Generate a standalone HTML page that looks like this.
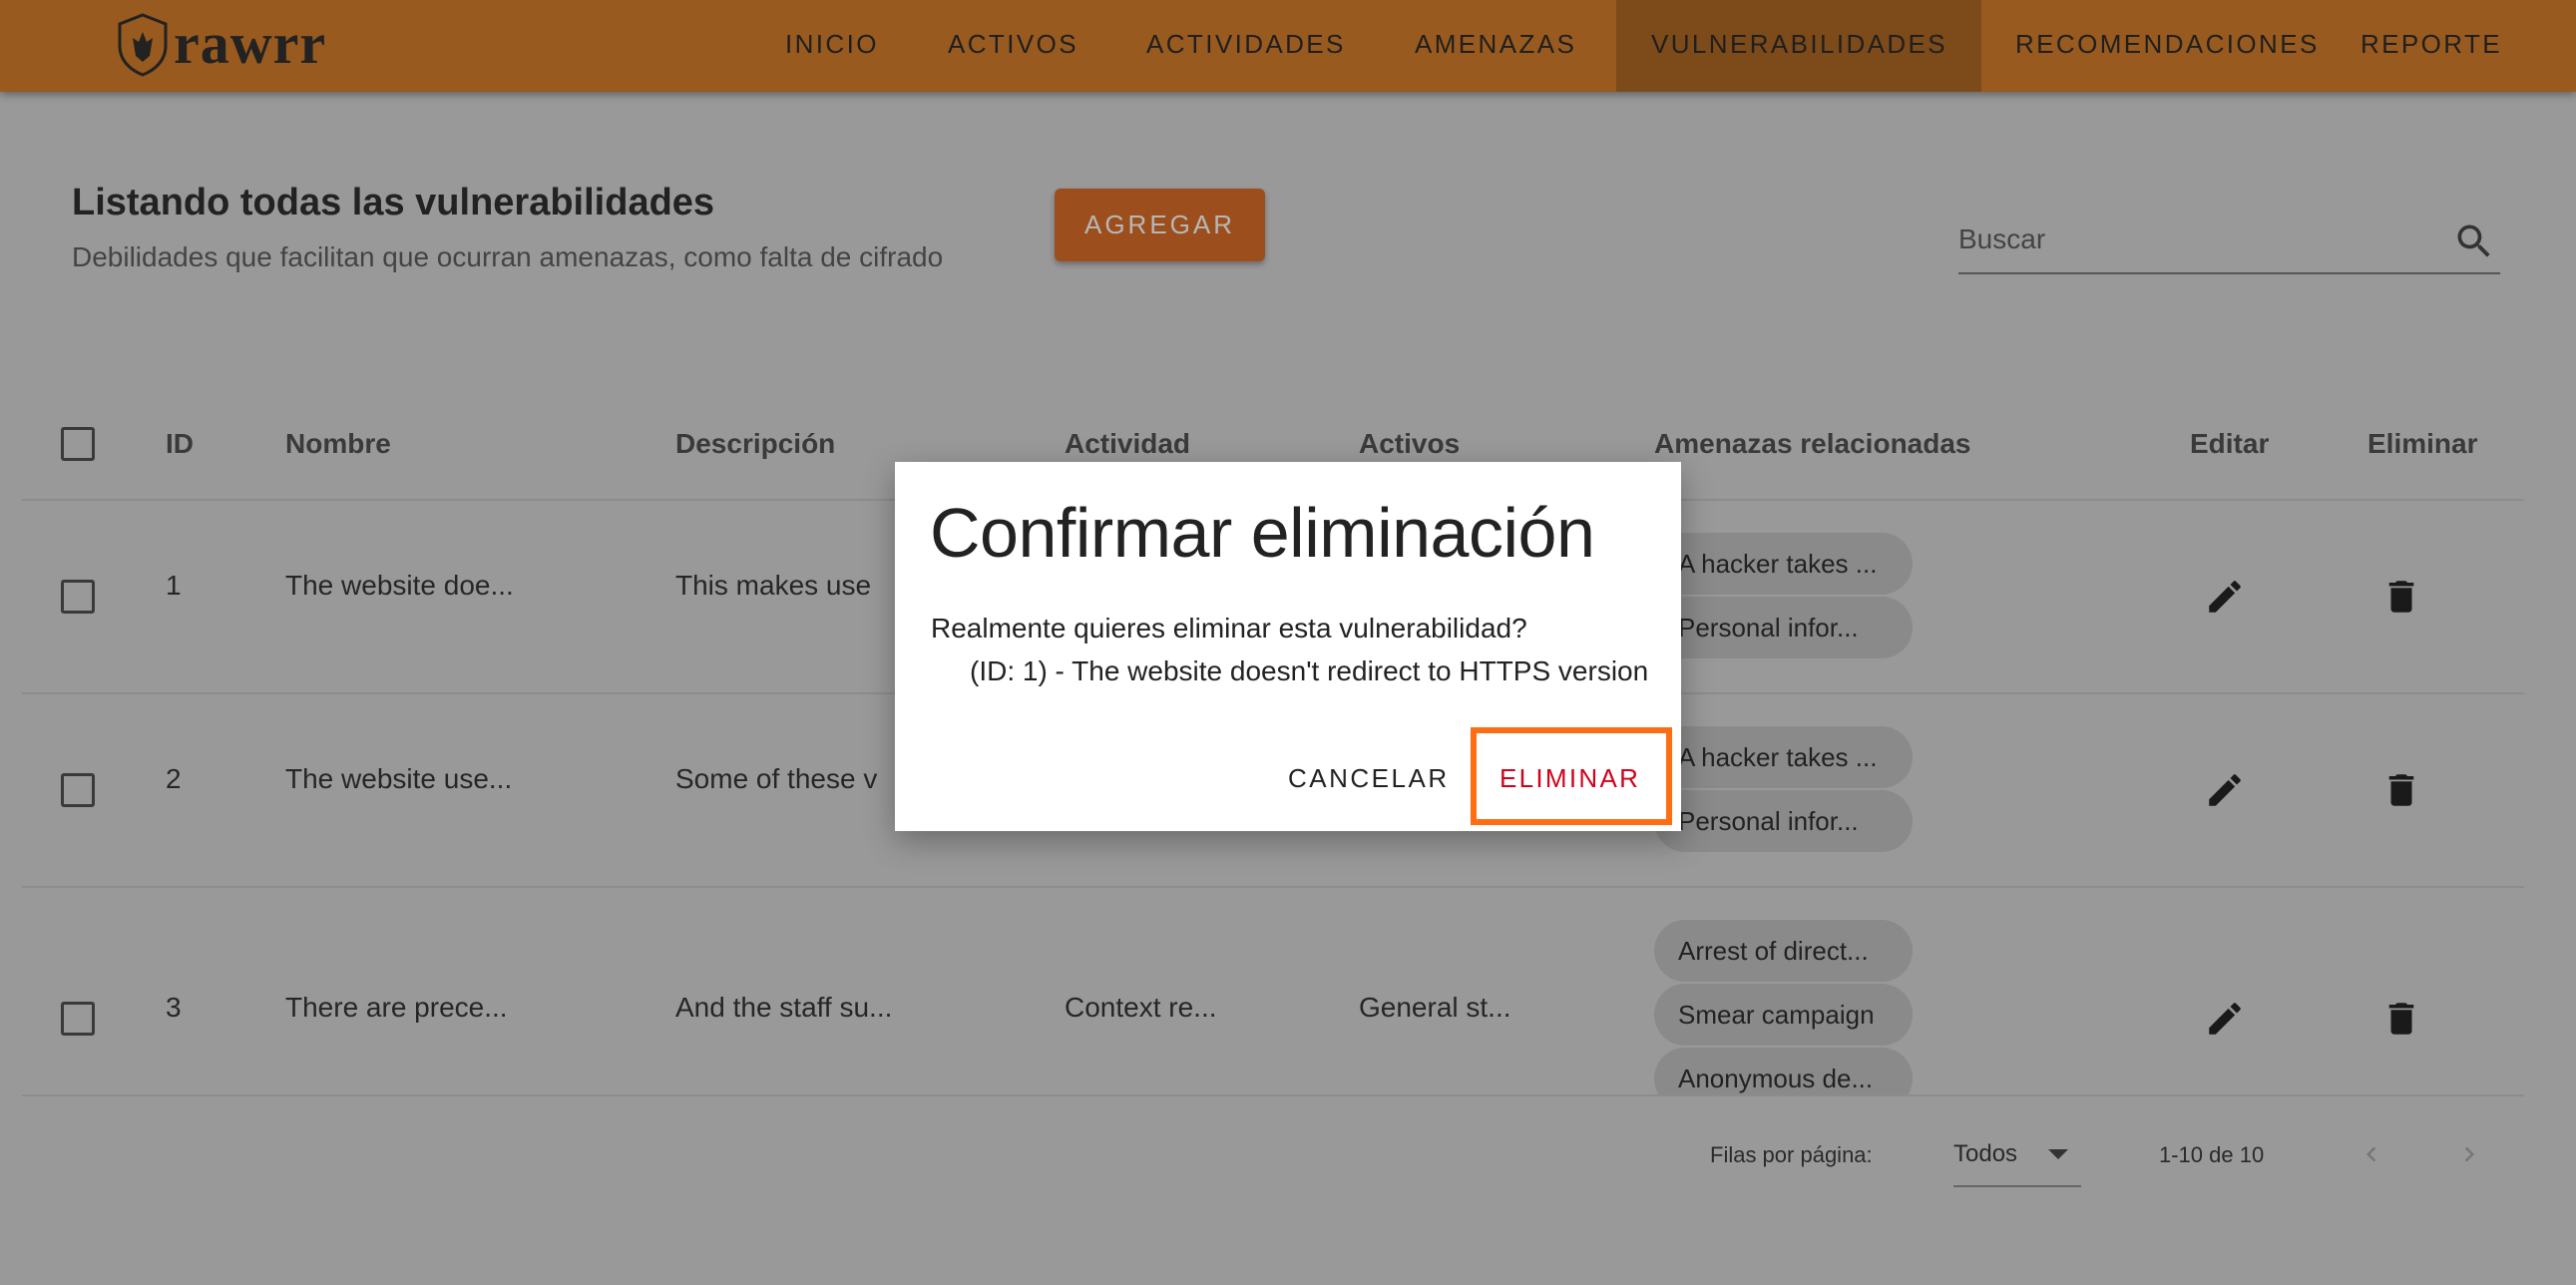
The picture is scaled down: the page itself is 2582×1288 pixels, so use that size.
<!DOCTYPE html>
<html><head><meta charset="utf-8"><style>
*{margin:0;padding:0;box-sizing:border-box}
body{width:2582px;height:1288px;background:#999;font-family:"Liberation Sans",sans-serif;position:relative;overflow:hidden;color:#222}
.a{position:absolute;white-space:nowrap}
.hdr{position:absolute;left:0;top:0;width:2582px;height:92px;background:#985a1e;box-shadow:0 3px 8px rgba(0,0,0,.35)}
.nav{position:absolute;top:29px;font-size:26px;letter-spacing:2.4px;color:#1f1f1f}
.th{top:429px;font-size:28px;font-weight:bold;color:#3a3a3a}
.td{font-size:28px;color:#262626}
.cb{position:absolute;left:61px;width:34px;height:34px;border:3px solid #3a3a3a;border-radius:3px}
.line{position:absolute;left:22px;width:2508px;height:2px;background:#8c8c8c}
.chip{position:absolute;left:1658px;width:259px;height:62px;border-radius:31px;background:#8a8a8a;font-size:26px;color:#222;padding-left:24px;line-height:62px}
svg.i{position:absolute;width:42px;height:42px}
</style></head><body>
<div class="hdr">
 <svg class="a" style="left:116px;top:12px" width="54" height="66" viewBox="0 0 54 66"><path d="M27 3 L50 12 L50 34 C50 48 40 58 27 63 C14 58 4 48 4 34 L4 12 Z" fill="none" stroke="#222" stroke-width="3"/><path d="M27 20 L31 30 L37 26 L34 44 L27 50 L20 44 L17 26 L23 30 Z" fill="#222"/></svg>
 <div class="a" style="left:174px;top:10px;font-family:'Liberation Serif',serif;font-weight:bold;font-size:58px;color:#222;letter-spacing:1px">rawrr</div>
 <div style="position:absolute;left:1620px;top:0;width:366px;height:92px;background:#7d4a19"></div>
 <div class="nav" style="left:787px">INICIO</div>
 <div class="nav" style="left:950px">ACTIVOS</div>
 <div class="nav" style="left:1149px">ACTIVIDADES</div>
 <div class="nav" style="left:1418px">AMENAZAS</div>
 <div class="nav" style="left:1655px">VULNERABILIDADES</div>
 <div class="nav" style="left:2020px">RECOMENDACIONES</div>
 <div class="nav" style="left:2366px">REPORTE</div>
</div>

<div class="a" style="left:72px;top:182px;font-size:38px;font-weight:bold;color:#222">Listando todas las vulnerabilidades</div>
<div class="a" style="left:72px;top:242px;font-size:28px;color:#444">Debilidades que facilitan que ocurran amenazas, como falta de cifrado</div>
<div class="a" style="left:1057px;top:189px;width:211px;height:73px;background:#9c4f1c;border-radius:6px;box-shadow:0 3px 6px rgba(0,0,0,.3);color:#b7b7b7;font-size:26px;letter-spacing:3px;text-align:center;line-height:73px">AGREGAR</div>
<div class="a" style="left:1963px;top:224px;font-size:28px;color:#444">Buscar</div>
<svg class="a" style="left:2458px;top:220px" width="44" height="44" viewBox="0 0 24 24"><path fill="#333" d="M15.5 14h-.79l-.28-.27A6.47 6.47 0 0 0 16 9.5 6.5 6.5 0 1 0 9.5 16c1.610 0 3.090-.59 4.230-1.570l.27.28v.79l5 4.99L20.490 19l-4.990-5zm-6 0C7.010 14 5 11.990 5 9.500S7.010 5 9.500 5 14 7.010 14 9.500 11.990 14 9.500 14z"/></svg>
<div class="a" style="left:1963px;top:273px;width:543px;height:2px;background:#555"></div>

<div class="cb" style="top:428px"></div>
<div class="a th" style="left:166px">ID</div>
<div class="a th" style="left:286px">Nombre</div>
<div class="a th" style="left:677px">Descripción</div>
<div class="a th" style="left:1067px">Actividad</div>
<div class="a th" style="left:1362px">Activos</div>
<div class="a th" style="left:1658px">Amenazas relacionadas</div>
<div class="a th" style="left:2195px">Editar</div>
<div class="a th" style="left:2373px">Eliminar</div>
<div class="line" style="top:500px"></div>
<div class="line" style="top:694px"></div>
<div class="line" style="top:888px"></div>
<div class="line" style="top:1097px"></div>

<div class="cb" style="top:581px"></div>
<div class="a td" style="left:166px;top:571px">1</div>
<div class="a td" style="left:286px;top:571px">The website doe...</div>
<div class="a td" style="left:677px;top:571px">This makes use</div>
<div class="chip" style="top:534px">A hacker takes ...</div>
<div class="chip" style="top:598px">Personal infor...</div>

<div class="cb" style="top:775px"></div>
<div class="a td" style="left:166px;top:765px">2</div>
<div class="a td" style="left:286px;top:765px">The website use...</div>
<div class="a td" style="left:677px;top:765px">Some of these v</div>
<div class="chip" style="top:728px">A hacker takes ...</div>
<div class="chip" style="top:792px">Personal infor...</div>

<div class="cb" style="top:1004px"></div>
<div class="a td" style="left:166px;top:994px">3</div>
<div class="a td" style="left:286px;top:994px">There are prece...</div>
<div class="a td" style="left:677px;top:994px">And the staff su...</div>
<div class="a td" style="left:1067px;top:994px">Context re...</div>
<div class="a td" style="left:1362px;top:994px">General st...</div>
<div style="position:absolute;left:0;top:0;width:2582px;height:1097px;overflow:hidden;pointer-events:none">
<div class="chip" style="top:922px">Arrest of direct...</div>
<div class="chip" style="top:986px">Smear campaign</div>
<div class="chip" style="top:1050px">Anonymous de...</div>
</div>

<svg class="i" style="left:2209px;top:577px" viewBox="0 0 24 24"><path fill="#1a1a1a" d="M3 17.25V21h3.75L17.81 9.94l-3.75-3.75L3 17.25zM20.71 7.04a1 1 0 0 0 0-1.41l-2.34-2.34a1 1 0 0 0-1.41 0l-1.83 1.83 3.75 3.75 1.83-1.83z"/></svg>
<svg class="i" style="left:2386px;top:577px" viewBox="0 0 24 24"><path fill="#1a1a1a" d="M6 19c0 1.1.9 2 2 2h8c1.1 0 2-.9 2-2V7H6v12zM19 4h-3.5l-1-1h-5l-1 1H5v2h14V4z"/></svg>
<svg class="i" style="left:2209px;top:771px" viewBox="0 0 24 24"><path fill="#1a1a1a" d="M3 17.25V21h3.75L17.81 9.94l-3.75-3.75L3 17.25zM20.71 7.04a1 1 0 0 0 0-1.41l-2.34-2.34a1 1 0 0 0-1.41 0l-1.83 1.83 3.75 3.75 1.83-1.83z"/></svg>
<svg class="i" style="left:2386px;top:771px" viewBox="0 0 24 24"><path fill="#1a1a1a" d="M6 19c0 1.1.9 2 2 2h8c1.1 0 2-.9 2-2V7H6v12zM19 4h-3.5l-1-1h-5l-1 1H5v2h14V4z"/></svg>
<svg class="i" style="left:2209px;top:1000px" viewBox="0 0 24 24"><path fill="#1a1a1a" d="M3 17.25V21h3.75L17.81 9.94l-3.75-3.75L3 17.25zM20.71 7.04a1 1 0 0 0 0-1.41l-2.34-2.34a1 1 0 0 0-1.41 0l-1.83 1.83 3.75 3.75 1.83-1.83z"/></svg>
<svg class="i" style="left:2386px;top:1000px" viewBox="0 0 24 24"><path fill="#1a1a1a" d="M6 19c0 1.1.9 2 2 2h8c1.1 0 2-.9 2-2V7H6v12zM19 4h-3.5l-1-1h-5l-1 1H5v2h14V4z"/></svg>

<div class="a" style="left:1714px;top:1145px;font-size:22px;color:#2a2a2a">Filas por página:</div>
<div class="a" style="left:1958px;top:1143px;font-size:24px;color:#2a2a2a">Todos</div>
<svg class="a" style="left:2050px;top:1150px" width="26" height="14" viewBox="0 0 26 14"><path d="M3 2 L13 12 L23 2 Z" fill="#333"/></svg>
<div class="a" style="left:1958px;top:1188px;width:128px;height:2px;background:#666"></div>
<div class="a" style="left:2164px;top:1145px;font-size:22px;color:#2a2a2a">1-10 de 10</div>
<svg class="a" style="left:2362px;top:1142px" width="30" height="30" viewBox="0 0 24 24"><path d="M15.41 7.41 14 6l-6 6 6 6 1.41-1.41L10.83 12z" fill="#777"/></svg>
<svg class="a" style="left:2460px;top:1142px" width="30" height="30" viewBox="0 0 24 24"><path d="M10 6 8.59 7.41 13.17 12l-4.58 4.59L10 18l6-6z" fill="#777"/></svg>

<div class="a" style="left:897px;top:463px;width:788px;height:370px;background:#fff;box-shadow:0 10px 30px rgba(0,0,0,.3)"></div>
<div class="a" style="left:932px;top:494px;font-size:70px;color:#222;letter-spacing:-0.5px">Confirmar eliminación</div>
<div class="a" style="left:933px;top:614px;font-size:28px;color:#222">Realmente quieres eliminar esta vulnerabilidad?</div>
<div class="a" style="left:972px;top:657px;font-size:28px;color:#222">(ID: 1) - The website doesn't redirect to HTTPS version</div>
<div class="a" style="left:1291px;top:765px;font-size:26px;letter-spacing:2.5px;color:#222">CANCELAR</div>
<div class="a" style="left:1474px;top:729px;width:202px;height:98px;border:6px solid #ff6c12"></div>
<div class="a" style="left:1503px;top:765px;font-size:26px;letter-spacing:2.3px;color:#d0021b">ELIMINAR</div>
</body></html>
